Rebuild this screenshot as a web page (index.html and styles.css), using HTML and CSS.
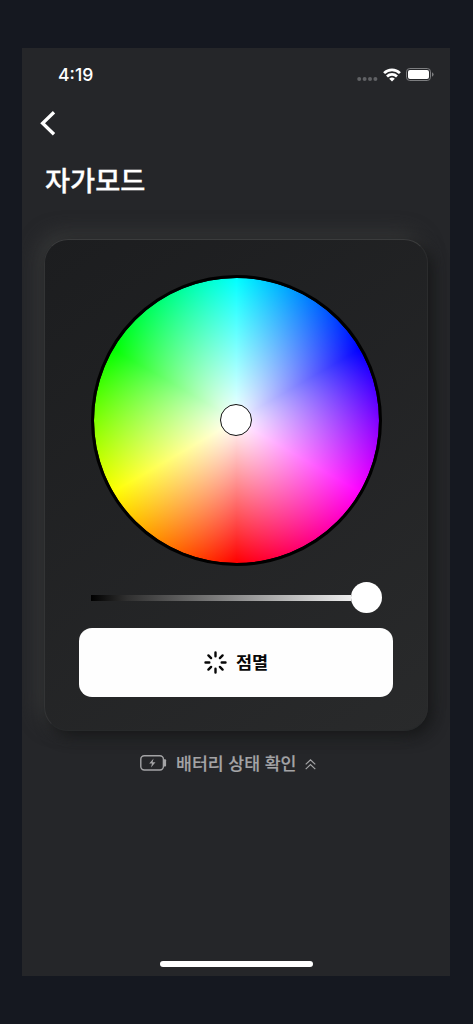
FILE: index.html
```html
<!DOCTYPE html>
<html lang="ko">
<head>
<meta charset="utf-8">
<meta name="viewport" content="width=device-width, initial-scale=1">
<title>자가모드</title>
<link rel="stylesheet" href="styles.css">
</head>
<body>
<main class="phone">
  <header class="status">
    <span class="time">4:19</span>
    <div class="indicators">
      <svg width="21" height="4" viewBox="0 0 21 4" fill="#606164"><circle cx="2.2" cy="2" r="2"/><circle cx="7.6" cy="2" r="2"/><circle cx="13" cy="2" r="2"/><circle cx="18.4" cy="2" r="2"/></svg>
      <svg class="wifi" width="18" height="14" viewBox="0 0 18 14" fill="none" stroke="#fff" stroke-width="2.7"><path d="M1.1 5.1C5.5.7 12.5.7 16.9 5.1"/><path d="M4 8.5C6.8 5.7 11.2 5.7 14 8.5"/><path d="M6.2 10.7Q9 8.5 11.8 10.7L9 13.6Z" fill="#fff" stroke="none"/></svg>
      <svg class="battery" width="28" height="13" viewBox="0 0 28 13"><rect x=".5" y=".5" width="24" height="12" rx="3.3" fill="none" stroke="#7d7e80"/><rect x="2" y="2" width="21" height="9" rx="2" fill="#fff"/><path d="M26 4.3Q27.6 5 27.6 6.5T26 8.7Z" fill="#7d7e80"/></svg>
    </div>
  </header>
  <nav class="nav">
    <button class="back" aria-label="뒤로"><svg width="16" height="26" viewBox="0 0 16 26" fill="none" stroke="#fff" stroke-width="3.3"><path d="M14 2.3L2.6 13.3L14 24.3"/></svg></button>
  </nav>
  <h1 class="title">자가모드</h1>
  <section class="card">
    <div class="wheel"><div class="picker"></div></div>
    <div class="slider"><div class="track"></div><div class="thumb"></div></div>
    <button class="blink">
      <svg width="23" height="23" viewBox="0 0 23 23" fill="none" stroke="#080808" stroke-width="2.4" stroke-linecap="round"><path d="M11.5 1.5V5.3M11.5 17.7V21.5M1.5 11.5H5.3M17.7 11.5H21.5M4.4 4.4L7.1 7.1M15.9 15.9L18.6 18.6M4.4 18.6L7.1 15.9M15.9 7.1L18.6 4.4"/></svg>
      <span>점멸</span>
    </button>
  </section>
  <div class="check">
    <svg width="27" height="16" viewBox="0 0 27 16"><rect x=".8" y=".8" width="22.6" height="14.2" rx="3.5" fill="none" stroke="#a4a4a6" stroke-width="1.4"/><path d="M24 4.3h1.1q1 0 1 1v5.2q0 1-1 1H24Z" fill="#a4a4a6"/><path d="M13.6 3.5L9.2 8.6H12L11 12.4L15.5 7.2H12.6Z" fill="#a4a4a6"/></svg>
    <span>배터리 상태 확인</span>
    <svg class="up" width="11" height="11" viewBox="0 0 11 11" fill="none" stroke="#a4a4a6" stroke-width="1.2"><path d="M.7 5.4L5.5.9L10.3 5.4M.7 10.1L5.5 5.6L10.3 10.1"/></svg>
  </div>
  <div class="home"></div>
</main>
</body>
</html>
```
FILE: styles.css
```css
* { box-sizing: border-box; }
body {
  margin: 0;
  height: 1024px;
  padding: 48px 23px 0 22px;
  background: #151820;
  font-family: Inter, "Noto Sans CJK KR", sans-serif;
  color: #fff;
}
button { border: 0; padding: 0; background: none; font: inherit; color: inherit; }
svg { display: block; flex: none; }
.phone {
  width: 428px;
  height: 927.5px;
  display: flex;
  flex-direction: column;
  overflow: hidden;
  background: #252629;
}
.status {
  height: 53px;
  flex: none;
  padding: 0 16px 0 36px;
  display: flex;
  align-items: center;
  justify-content: space-between;
}
.time { font-size: 17.6px; font-weight: 550; line-height: 20px; }
.indicators { display: flex; align-items: center; }
.indicators svg:first-child { margin-top: 8px; }
.wifi { margin: 0 5.5px 0 4.5px; }
.nav { height: 49px; flex: none; padding: 9px 0 0 17.5px; }
.back { display: block; }
.title {
  margin: 11px 0 0 23px;
  height: 42px;
  flex: none;
  font-size: 27.3px;
  line-height: 42px;
  font-weight: 500;
  -webkit-text-stroke: .3px currentColor;
}
.card {
  width: 384px;
  height: 492px;
  flex: none;
  margin: 36px 0 0 22px;
  border: 1px solid;
  border-color: #3b3c3d #2b2c2d #27292a #333435;
  border-radius: 24px;
  padding: 35px 34px 0;
  background: linear-gradient(145deg, #1c1d1f, #292a2b);
  box-shadow: 5px 5px 15px #151617, -5px -5px 20px #3a3b3b;
}
.wheel {
  width: 291px;
  height: 291px;
  margin: 0 0 0 12px;
  border: 3.5px solid #000;
  border-radius: 50%;
  display: grid;
  place-items: center;
  background:
    radial-gradient(closest-side, #fff, rgba(255,255,255,0)) padding-box,
    conic-gradient(#0ff, #00f 60deg, #f0f 120deg, #f00 180deg, #ff0 240deg, #0f0 300deg, #0ff) padding-box,
    #000;
}
.picker { width: 32px; height: 32px; margin: 0 1px 1px 0; border: 1.5px solid #111; border-radius: 50%; background: #fff; }
.slider {
  width: 291px;
  height: 31px;
  margin: 16px 0 0 12px;
  display: flex;
  align-items: center;
}
.track { flex: 1; height: 6px; background: linear-gradient(90deg, #000, #303030 14%, #eee); }
.thumb { width: 31px; height: 31px; border-radius: 50%; background: #fff; }
.blink {
  width: 314px;
  height: 69px;
  margin-top: 15px;
  display: flex;
  align-items: center;
  justify-content: center;
  gap: 9px;
  border-radius: 13px;
  background: #fefefe;
  color: #080808;
  font-size: 17.5px;
  line-height: 26px;
  font-weight: 700;
}
.check {
  height: 28px;
  flex: none;
  margin: 18px 0 0 118px;
  display: flex;
  align-items: center;
  color: #a4a4a6;
  font-size: 17.3px;
  line-height: 28px;
  font-weight: 500;
}
.check span { margin: 1px 8px 0 9px; -webkit-text-stroke: .15px currentColor; }
.up { margin-top: 3px; }
.home { width: 153px; height: 6px; margin: auto 0 9px 138px; border-radius: 3px; background: #fff; }
```
